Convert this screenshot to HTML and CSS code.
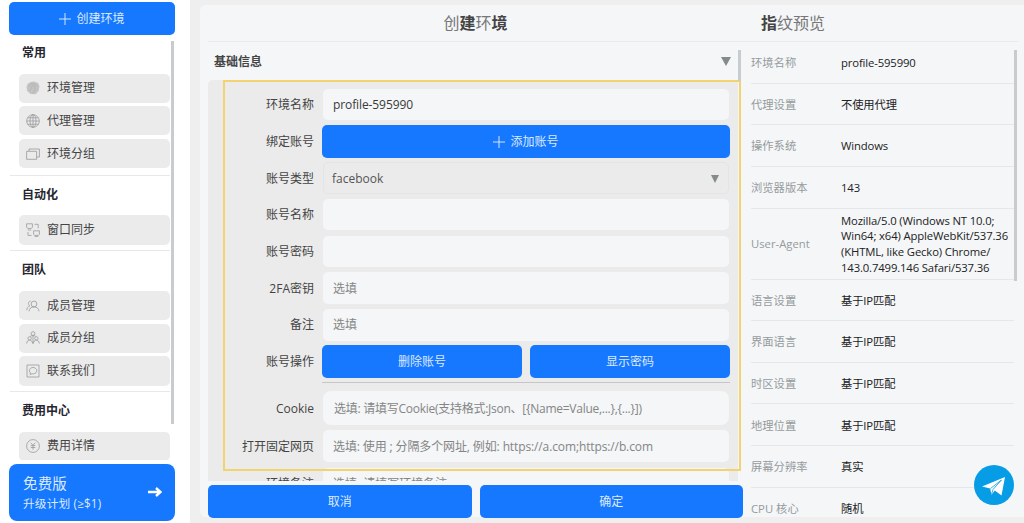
FILE: index.html
```html
<!doctype html>
<html lang="zh-CN">
	<head>
		<meta charset="utf-8" />
		<title>创建环境</title>
		<link rel="stylesheet" href="styles.css">
	</head>
	<body>
		<aside>
			<button class="btn create"><svg class="plus" viewBox="0 0 12 12"><path d="M6 0v12M0 6h12"/></svg>创建环境</button>
			<nav>
				<section>
					<h2>常用</h2>
					<a class="item"><svg viewBox="0 0 14 14"><path class="fill" d="M4 1.2 8 .5l4 1.4 1.4 3.4-.8 4.6-3 3.4-5-.2L1.2 10 .5 6 1.6 3z"/><path class="ridge" d="M3 10c3-1 1-4 3-5s4 1 3 4-3 3-3 3M3 5c2-3 6-3 8 0"/></svg>环境管理</a>
					<a class="item"><svg viewBox="0 0 14 14"><circle cx="7" cy="7" r="6.3"/><ellipse cx="7" cy="7" rx="3" ry="6.3"/><path d="M7 .7v12.6M.7 7h12.6M1.6 3.8h10.8M1.6 10.2h10.8"/></svg>代理管理</a>
					<a class="item"><svg viewBox="0 0 14 14"><path d="M.6 4.3h10v8H.6zM3 4V2h10.4v8h-2.6"/></svg>环境分组</a>
				</section>
				<section>
					<h2>自动化</h2>
					<a class="item"><svg viewBox="0 0 14 14"><path d="M.6.800h5.800v3.400l-1 1.200H1.600l-1-1.200zM1.800 7h3.400M7.600 7.800h5.800v3.400l-1 1.200H8.600l-1-1.200zM8.600 13.600h3.600M8.500 1.300h3.700v4M2 9v3.400h3.600"/></svg>窗口同步</a>
				</section>
				<section>
					<h2>团队</h2>
					<a class="item"><svg viewBox="0 0 14 14"><circle cx="8" cy="5" r="2.9"/><path d="M3 12.3c.3-2.8 2-4.4 5-4.4s4.7 1.6 5 4.4M4.6 2.2C2.3 2 1.5 5.5 3.800 6.900 2 7.500.9 9 .8 11.200"/></svg>成员管理</a>
					<a class="item"><svg viewBox="0 0 14 14"><circle cx="7" cy="2.6" r="1.9"/><circle cx="3.6" cy="7.4" r="1.7"/><circle cx="10.4" cy="7.4" r="1.7"/><path d="M4.3 5.3C5 4.5 9 4.5 9.7 5.3M7 4.5v8M.7 12.5c.2-4.5 5.6-4.5 5.9 0M7.4 12.5c.2-4.5 5.6-4.5 5.9 0"/></svg>成员分组</a>
					<a class="item"><svg viewBox="0 0 14 14"><path d="M1 1h12v12H1zM4 10.5l.4-1.6C2 6.5 4 3.5 7 3.5s5 3 3 5.2C8.5 10 7 10 6 9.7z"/></svg>联系我们</a>
				</section>
				<section>
					<h2>费用中心</h2>
					<a class="item"><svg viewBox="0 0 14 14"><circle cx="7" cy="7" r="6.4"/><path d="M4.7 3.7 7 6.3l2.3-2.6M7 6.3v4.4M4.7 6.6h4.6M4.7 8.5h4.6"/></svg>费用详情</a>
				</section>
			</nav>
			<a class="plan">
				<span><b>免费版</b>升级计划 (≥$1)</span>
				<svg viewBox="0 0 14 10"><path d="M0 5h12M8 1l4.5 4L8 9"/></svg>
			</a>
		</aside>

		<main>
			<header>
				<h1>创<b>建</b>环<b>境</b></h1>
				<h1 class="preview-title"><b>指</b>纹预览</h1>
			</header>
			<div class="columns">
				<div class="form">
					<div class="collapse">基础信息<i class="caret"></i></div>
					<div class="fields">
						<div class="row"><label>环境名称</label><div class="input value">profile-595990</div></div>
						<div class="row"><label>绑定账号</label><button class="btn"><svg class="plus" viewBox="0 0 12 12"><path d="M6 0v12M0 6h12"/></svg>添加账号</button></div>
						<div class="row"><label>账号类型</label><div class="input select">facebook<i class="caret"></i></div></div>
						<div class="row"><label>账号名称</label><div class="input"></div></div>
						<div class="row"><label>账号密码</label><div class="input"></div></div>
						<div class="row"><label>2FA密钥</label><div class="input">选填</div></div>
						<div class="row"><label>备注</label><div class="input">选填</div></div>
						<div class="row"><label>账号操作</label><button class="btn">删除账号</button><button class="btn">显示密码</button></div>
						<hr>
						<div class="row cookie"><label>Cookie</label><div class="input">选填: 请填写Cookie(支持格式:Json、[{Name=Value,...},{...}])</div></div>
						<div class="row urls"><label>打开固定网页</label><div class="input">选填: 使用 ; 分隔多个网址, 例如: https://a.com;https://b.com</div></div>
						<div class="row note"><label>环境备注</label><div class="input">选填: 请填写环境备注</div></div>
					</div>
					<div class="highlight"></div>
					<div class="actions">
						<button class="btn">取消</button>
						<button class="btn">确定</button>
					</div>
				</div>
				<dl class="preview">
					<div><dt>环境名称</dt><dd>profile-595990</dd></div>
					<div><dt>代理设置</dt><dd>不使用代理</dd></div>
					<div><dt>操作系统</dt><dd>Windows</dd></div>
					<div><dt>浏览器版本</dt><dd>143</dd></div>
					<div class="agent"><dt>User-Agent</dt><dd>Mozilla/5.0 (Windows NT 10.0;<br>Win64; x64) AppleWebKit/537.36<br>(KHTML, like Gecko) Chrome/<br>143.0.7499.146 Safari/537.36</dd></div>
					<div><dt>语言设置</dt><dd>基于IP匹配</dd></div>
					<div><dt>界面语言</dt><dd>基于IP匹配</dd></div>
					<div><dt>时区设置</dt><dd>基于IP匹配</dd></div>
					<div><dt>地理位置</dt><dd>基于IP匹配</dd></div>
					<div><dt>屏幕分辨率</dt><dd>真实</dd></div>
					<div><dt>CPU 核心</dt><dd>随机</dd></div>
				</dl>
			</div>
		</main>
		<a class="telegram"><svg viewBox="0 0 40 40"><path d="M8 21.5 31 12l-3.5 18.500-6.700-5-3.400 4.300-1.200-6.300z"/><path class="fold" d="m16.500 23.500 11-8.500-8.500 9.500-1.400 4.500"/></svg></a>
	</body>
</html>
```

FILE: styles.css
```css
* {
	box-sizing: border-box;
}

body {
	margin: 0;
	width: 1024px;
	height: 523px;
	overflow: hidden;
	display: flex;
	background: #efefef;
	color: #444;
	font: 12px/16px "Open Sans", "Noto Sans CJK SC", sans-serif;
}

.btn {
	display: flex;
	flex: 1;
	align-items: center;
	justify-content: center;
	gap: 5px;
	height: 33px;
	padding: 1px 0 0;
	border: 0;
	border-radius: 5px;
	background: #1677ff;
	color: #dceaff;
	font: inherit;
}

.plus {
	width: 12px;
	height: 12px;
	fill: none;
	stroke: #d5e6ff;
}

.caret {
	border: solid transparent;
	border-width: 9px 5.5px 0;
	border-top-color: #858a8a;
}

/* sidebar */

aside {
	position: relative;
	width: 190px;
	flex: none;
	padding: 1.5px 15px 0 9px;
	background: #fff;
}

.create {
	width: 166px;
}

nav {
	width: 161px;
	height: 419px;
	margin-top: 6.5px;
	padding-left: 1px;
	overflow: hidden;
}

nav section {
	padding-bottom: 6.8px;
}

nav section + section {
	padding-bottom: 5.7px;
	border-top: 1px solid #e8e8e8;
}

nav h2 {
	margin: 0;
	padding: 4px 0 0 12px;
	height: 32.5px;
	font-size: 12px;
	line-height: 16px;
	color: #262630;
}

nav section + section h2 {
	padding-top: 11px;
	height: 39.5px;
}

.item {
	display: flex;
	align-items: center;
	gap: 7px;
	height: 29.3px;
	margin: 0 0 3.4px 9px;
	padding-left: 7px;
	border-radius: 5px;
	background: #ebebeb;
}

.item:last-child {
	margin-bottom: 0;
}

.item svg {
	width: 14px;
	height: 14px;
	fill: none;
	stroke: #999;
	stroke-width: .8;
}

.item .fill {
	fill: #c3c3c3;
	stroke: none;
}

.item .ridge {
	stroke: #b3b3b3;
}

.plan {
	display: flex;
	align-items: center;
	justify-content: space-between;
	width: 166px;
	height: 57px;
	margin-top: 3.5px;
	padding: 0 13px 0 14px;
	border-radius: 8px;
	background: #1677ff;
	color: #dceaff;
	font-size: 11.7px;
	letter-spacing: .15px;
}

.plan b {
	display: block;
	margin-bottom: 2px;
	font-size: 14.5px;
	line-height: 19px;
	font-weight: normal;
}

.plan svg {
	width: 14px;
	height: 10px;
	fill: none;
	stroke: #fff;
	stroke-width: 2.4;
}

/* scrollbars */

aside::after, .form::after, .preview::after {
	content: "";
	position: absolute;
	width: 3px;
	background: #c8cccf;
}

aside::after {
	left: 171px;
	top: 41px;
	height: 383px;
}

/* main panel */

main {
	width: 824px;
	height: 512px;
	margin: 5px 0 0 10px;
	border-radius: 6px 0 0 6px;
	background: #f4f6f8;
}

header {
	display: flex;
	height: 37px;
	margin: 0 6px 0 8px;
	border-bottom: 1px solid #e8eaec;
}

h1 {
	width: 535px;
	margin: 0;
	text-align: center;
	font-size: 16px;
	line-height: 36px;
	font-weight: normal;
	color: #777;
}

h1 b {
	color: #444;
}

.preview-title {
	width: auto;
	padding-left: 18px;
}

.columns {
	display: flex;
}

.form {
	position: relative;
	flex: none;
	width: 535px;
	margin-left: 8px;
}

.form::after {
	left: 530px;
	top: 8px;
	height: 31px;
}

.collapse {
	display: flex;
	align-items: center;
	justify-content: space-between;
	height: 38px;
	padding: 1px 12px 0 6px;
	font-weight: bold;
}

.fields {
	width: 530px;
	height: 401px;
	padding: 6.3px 8px 0 0;
	overflow: hidden;
	border-radius: 5px 0 0 0;
	background: #ebebeb;
}

.row {
	display: flex;
	align-items: center;
	gap: 8px;
	height: 36.7px;
}

.row label {
	width: 106px;
	padding: 1px 0 0;
	text-align: right;
}

.input {
	flex: 1;
	display: flex;
	align-items: center;
	height: 31.5px;
	margin: 0 1px;
	padding: 1px 10px 0;
	border-radius: 5px;
	background: #f4f6f7;
	color: #858585;
	white-space: nowrap;
}

.value {
	color: #3a3a3a;
	letter-spacing: -.1px;
}

.select {
	justify-content: space-between;
	padding: 1px 9px 0 8px;
	border: 1px solid #e4e4e4;
	background: #ebebeb;
	color: #555;
}

.select .caret {
	border-width: 8px 4.5px 0;
}

hr {
	height: 1px;
	margin: 2.5px 0 0 114px;
	border: 0;
	background: #c8c5c8;
}

.cookie {
	height: 34px;
	margin-top: 8px;
}

.cookie .input {
	height: 34px;
	padding-left: 11px;
	border-radius: 8px;
	letter-spacing: -.26px;
}

.urls {
	margin-top: 2.5px;
}

.urls .input {
	letter-spacing: -.12px;
}

.note {
	margin-top: 1px;
}

.highlight {
	position: absolute;
	left: 15px;
	top: 38px;
	width: 518px;
	height: 391px;
	border: 2px solid #f3d270;
}

.actions {
	display: flex;
	gap: 8px;
	margin-top: 3.5px;
}

/* fingerprint preview */

.preview {
	position: relative;
	width: 276px;
	height: 475px;
	margin: 0;
	padding-left: 8px;
	overflow: hidden;
	font-size: 11.3px;
	line-height: 15.6px;
}

.preview::after {
	left: 271px;
	top: 8px;
	height: 231px;
}

.preview div {
	display: flex;
	align-items: center;
	width: 263px;
	height: 41.65px;
	padding-top: 1px;
	border-bottom: 1px solid #e5e7e9;
}

.preview .agent {
	height: 71px;
}

dt {
	width: 90px;
	flex: none;
	color: #969b9c;
}

dd {
	margin: 0;
	color: #222;
	letter-spacing: -.14px;
	white-space: nowrap;
}

.telegram {
	position: absolute;
	left: 974px;
	top: 464.5px;
	width: 40px;
	height: 40px;
	border-radius: 50%;
	background: #079ce6;
}

.telegram svg {
	display: block;
	fill: #fff;
}

.telegram .fold {
	fill: none;
	stroke: #079ce6;
	stroke-width: .8;
}
```
